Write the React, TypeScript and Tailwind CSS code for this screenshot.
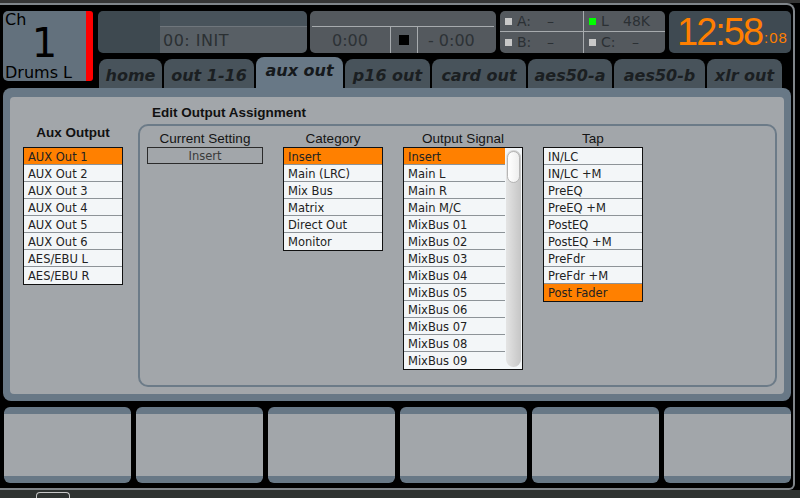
const dv = "font-['DejaVu_Sans',sans-serif]";
const ls = "font-['Liberation_Sans',Arial,sans-serif]";

const tabs = [
  { label: "home", w: "w-[63px]", active: false },
  { label: "out 1-16", w: "w-[90px]", active: false },
  { label: "aux out", w: "w-[87px]", active: true },
  { label: "p16 out", w: "w-[85px]", active: false },
  { label: "card out", w: "w-[94px]", active: false },
  { label: "aes50-a", w: "w-[84px]", active: false },
  { label: "aes50-b", w: "w-[91px]", active: false },
  { label: "xlr out", w: "w-[75px]", active: false },
];

const auxOutputs = ["AUX Out 1", "AUX Out 2", "AUX Out 3", "AUX Out 4", "AUX Out 5", "AUX Out 6", "AES/EBU L", "AES/EBU R"];
const categories = ["Insert", "Main (LRC)", "Mix Bus", "Matrix", "Direct Out", "Monitor"];
const signals = ["Insert", "Main L", "Main R", "Main M/C", "MixBus 01", "MixBus 02", "MixBus 03", "MixBus 04", "MixBus 05", "MixBus 06", "MixBus 07", "MixBus 08", "MixBus 09"];
const taps = ["IN/LC", "IN/LC +M", "PreEQ", "PreEQ +M", "PostEQ", "PostEQ +M", "PreFdr", "PreFdr +M", "Post Fader"];

function Rows({ items, sel }: { items: string[]; sel: number }) {
  return (
    <div className="flex flex-col">
      {items.map((t, i) => (
        <div
          key={t}
          className={`h-[17px] pl-[4px] leading-[19px] text-[11.5px] text-[#222] border-b border-[#8d9398] last:border-b-0 ${dv} ${
            i === sel ? "bg-[#ff8000]" : "bg-[#f3f6f8]"
          }`}
        >
          {t}
        </div>
      ))}
    </div>
  );
}

function Header({ children }: { children: string }) {
  return <div className={`h-[21px] pt-[4px] leading-[17px] text-center text-[13.5px] text-[#141414] ${ls}`}>{children}</div>;
}

export default function App() {
  return (
    <div className="w-[800px] h-[498px] bg-black overflow-hidden flex flex-col">
      <div className="h-[3px] bg-[#353535] shrink-0" />
      <div className="w-[795px] h-[487px] shrink-0 border-t-2 border-r-2 border-b-2 border-[#80858a] rounded-tr-[8px] rounded-br-[6px] pl-[3px] pt-[6px] flex flex-col">
        {/* header */}
        <div className="flex h-[77px]">
          <div className="flex h-[70px]">
            <div className={`w-[83px] h-[70px] bg-[#63717d] rounded-l-[5px] flex flex-col pt-[1px] pl-[2px] text-black ${dv}`}>
              <div className="text-[16px] leading-[16px] h-[16px]">Ch</div>
              <div className="text-[40px] leading-[40px] h-[40px] -mt-[5px] text-center pr-[2px]">1</div>
              <div className="text-[16px] leading-[16px] h-[16px] mt-[2px]">Drums L</div>
            </div>
            <div className="w-[7px] h-[70px] bg-[#ff0000] rounded-r-[3px]" />
          </div>
          <div className="ml-[5px] w-[693px] flex flex-col">
            <div className="flex h-[42px] gap-[4px]">
              {/* scene */}
              <div className="w-[209px] mr-[-1px] flex rounded-[5px] overflow-hidden">
                <div className="w-[62px] bg-[#3e4950]" />
                <div className="flex-1 flex flex-col">
                  <div className="h-[21px] bg-[#48535b]" />
                  <div className={`flex-1 bg-[#585f65] border-t border-[#6f767c] flex items-center pl-[3px] pt-[2px] text-[16px] tracking-[0.5px] text-[#2b3033] ${dv}`}>
                    00: INIT
                  </div>
                </div>
              </div>
              {/* transport */}
              <div className={`w-[186px] bg-[#54595e] rounded-[5px] flex flex-col text-[#2d3236] ${dv}`}>
                <div className="h-[21px] mx-[2px] border-b border-[#a7abae]" />
                <div className="flex-1 flex text-[16px]">
                  <div className="w-[80px] flex items-center justify-center pt-[2px]">0:00</div>
                  <div className="w-[1px] bg-[#a7abae]" />
                  <div className="w-[26px] flex items-center justify-center">
                    <div className="w-[10px] h-[10px] bg-black" />
                  </div>
                  <div className="w-[1px] bg-[#a7abae]" />
                  <div className="flex-1 flex items-center pl-[10px] pt-[2px]">- 0:00</div>
                </div>
              </div>
              {/* status */}
              <div className={`w-[165px] bg-[#54595e] rounded-[5px] flex text-[14px] text-[#2b3034] ${dv}`}>
                <div className="w-[83px] flex flex-col">
                  <div className="h-[21px] border-b border-[#a7abae] flex items-center pl-[5px]">
                    <div className="w-[7px] h-[7px] bg-[#c8c8c8]" />
                    <span className="ml-[5px] w-[30px]">A:</span>
                    <span>–</span>
                  </div>
                  <div className="flex-1 flex items-center pl-[5px]">
                    <div className="w-[7px] h-[7px] bg-[#c8c8c8]" />
                    <span className="ml-[5px] w-[30px]">B:</span>
                    <span>–</span>
                  </div>
                </div>
                <div className="w-[1px] bg-[#a7abae]" />
                <div className="flex-1 flex flex-col">
                  <div className="h-[21px] border-b border-[#a7abae] flex items-center pl-[5px]">
                    <div className="w-[7px] h-[7px] bg-[#00ff00]" />
                    <span className="ml-[5px] w-[22px]">L</span>
                    <span>48K</span>
                  </div>
                  <div className="flex-1 flex items-center pl-[5px]">
                    <div className="w-[7px] h-[7px] bg-[#c8c8c8]" />
                    <span className="ml-[5px] w-[31px]">C:</span>
                    <span>–</span>
                  </div>
                </div>
              </div>
              {/* clock */}
              <div className={`w-[122px] bg-[#3f4a52] rounded-[5px] flex items-center pl-[8px] text-[#ff7f00] ${ls}`}>
                <span className="text-[38px] leading-[38px] tracking-[-2px]">12:58</span>
                <span className="text-[15px] leading-[15px] tracking-[1px] self-end mb-[8px] ml-[2px]">:08</span>
              </div>
            </div>
            {/* tabs */}
            <div className="flex items-end gap-[2px] h-[35px] ml-[1px]">
              {tabs.map((t) =>
                t.active ? (
                  <div
                    key={t.label}
                    className={`${t.w} h-[31px] bg-[#687886] rounded-t-[8px] flex items-center justify-center pb-[4px] text-[16px] font-bold italic text-[#15191c] ${dv}`}
                  >
                    {t.label}
                  </div>
                ) : (
                  <div
                    key={t.label}
                    className={`${t.w} h-[29px] bg-[#48535b] rounded-t-[8px] flex items-center justify-center pt-[5px] text-[16px] font-bold italic text-[#1b1f22] ${dv}`}
                  >
                    {t.label}
                  </div>
                )
              )}
            </div>
          </div>
        </div>

        {/* main panel */}
        <div className="w-[788px] h-[313px] bg-[#687886] rounded-[8px] pt-[9px] px-[7px] pb-[7px]">
          <div className="h-full bg-[#a2a6aa] rounded-[4px] flex flex-col">
            <div className={`mt-[7px] ml-[142px] leading-[17px] text-[13.5px] font-bold text-[#111] ${ls}`}>Edit Output Assignment</div>
            <div className="flex mt-[3px]">
              <div className="ml-[13px] w-[100px]">
                <div className={`h-[23px] leading-[17px] text-center text-[13.5px] font-bold text-[#111] ${ls}`}>Aux Output</div>
                <div className="border border-[#111]">
                  <Rows items={auxOutputs} sel={0} />
                </div>
              </div>
              <div className="ml-[15px] w-[639px] h-[263px] border-2 border-[#6c7b88] rounded-[10px] pl-[7px] flex gap-[20px]">
                <div className="w-[116px]">
                  <Header>Current Setting</Header>
                  <div className={`h-[17px] border border-[#2b2b2b] text-center leading-[17px] text-[11.5px] text-[#3a3a3a] ${dv}`}>Insert</div>
                </div>
                <div className="w-[100px]">
                  <Header>Category</Header>
                  <div className="border border-[#111]">
                    <Rows items={categories} sel={0} />
                  </div>
                </div>
                <div className="w-[120px]">
                  <Header>Output Signal</Header>
                  <div className="border border-[#111] flex bg-[#f3f6f8]">
                    <div className="flex-1">
                      <Rows items={signals} sel={0} />
                    </div>
                    <div className="w-[17px] p-[1px] pt-[2px] pb-[2px]">
                      <div className="h-full rounded-full bg-gradient-to-r from-[#e4e4e4] to-[#c6c6c6] pt-[1px] px-[1px]">
                        <div className="h-[32px] rounded-full bg-gradient-to-r from-white to-[#eeeeee] border border-[#b5b5b5]" />
                      </div>
                    </div>
                  </div>
                </div>
                <div className="w-[100px]">
                  <Header>Tap</Header>
                  <div className="border border-[#111]">
                    <Rows items={taps} sel={8} />
                  </div>
                </div>
              </div>
            </div>
          </div>
        </div>

        {/* soft keys */}
        <div className="grid grid-cols-6 gap-[5px] w-[787px] ml-[1px] mt-[6px] h-[76px]">
          {[0, 1, 2, 3, 4, 5].map((i) => (
            <div key={i} className="bg-[#a2a6aa] border-t-[7px] border-b-[7px] border-[#687886] rounded-[6px]" />
          ))}
        </div>
      </div>
      <div className="h-[8px] bg-[#2f3331] shrink-0 flex items-end pl-[36px]">
        <div className="w-[34px] h-[6px] border-t border-l border-r border-[#c8c8c8] rounded-t-[4px]" />
      </div>
    </div>
  );
}
